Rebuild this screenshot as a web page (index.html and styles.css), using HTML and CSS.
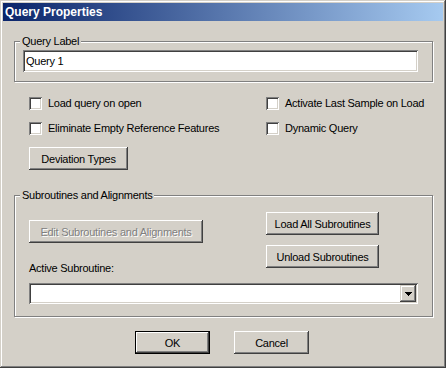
FILE: index.html
```html
<!DOCTYPE html>
<html>
<head>
<meta charset="utf-8">
<link rel="stylesheet" href="styles.css">
</head>
<body>
<div class="window">
  <div class="titlebar">Query Properties</div>
  <div class="group group-label">
    <span class="caption">Query Label</span>
    <div class="textbox">Query 1</div>
  </div>
  <div class="checks">
    <label class="check"><span class="box"></span>Load query on open</label>
    <label class="check"><span class="box"></span>Activate Last Sample on Load</label>
    <label class="check"><span class="box"></span>Eliminate Empty Reference Features</label>
    <label class="check"><span class="box"></span>Dynamic Query</label>
  </div>
  <button class="btn btn-deviation">Deviation Types</button>
  <div class="group group-sub">
    <span class="caption">Subroutines and Alignments</span>
    <div class="sub-row">
      <div class="sub-left">
        <button class="btn btn-edit" disabled>Edit Subroutines and Alignments</button>
        <div class="active-label">Active Subroutine:</div>
      </div>
      <div class="sub-right">
        <button class="btn btn-wide">Load All Subroutines</button>
        <button class="btn btn-wide">Unload Subroutines</button>
      </div>
    </div>
    <div class="combo">
      <span class="drop"><svg width="7" height="4" viewBox="0 0 7 4" shape-rendering="crispEdges"><rect x="0" y="0" width="7" height="1"/><rect x="1" y="1" width="5" height="1"/><rect x="2" y="2" width="3" height="1"/><rect x="3" y="3" width="1" height="1"/></svg></span>
    </div>
  </div>
  <div class="actions">
    <button class="btn btn-action btn-default">OK</button>
    <button class="btn btn-action">Cancel</button>
  </div>
</div>
</body>
</html>
```
FILE: styles.css
```css
html, body {
  margin: 0;
  padding: 0;
  background: #d4d0c8;
}
body {
  font-family: "Liberation Sans", Arial, sans-serif;
  font-size: 11px;
  letter-spacing: -0.25px;
  color: #000;
}
.window {
  width: 446px;
  height: 368px;
  box-sizing: border-box;
  padding: 3px;
  background: #d4d0c8;
  box-shadow: inset -1px -1px 0 #404040, inset 1px 1px 0 #d4d0c8, inset -2px -2px 0 #808080, inset 2px 2px 0 #fff;
}
.titlebar {
  height: 18px;
  line-height: 18px;
  padding-left: 2px;
  background: linear-gradient(to right, #0a246a, #a6caf0);
  color: #fff;
  font-weight: bold;
  font-size: 12px;
  letter-spacing: 0;
}
.group {
  position: relative;
  border: 1px solid #808080;
  box-shadow: 1px 1px 0 #fff, inset 1px 1px 0 #fff;
  margin-left: 11px;
  margin-right: 10px;
}
.caption {
  position: absolute;
  top: -7px;
  left: 5px;
  padding: 0 2px;
  line-height: 13px;
  background: #d4d0c8;
}
.group-label {
  margin-top: 20px;
  padding: 8px 14px 9px 8px;
}
.textbox {
  width: 395px;
  height: 22px;
  box-sizing: border-box;
  padding-left: 3px;
  line-height: 22px;
  background: #fff;
  box-shadow: inset 1px 1px 0 #808080, inset -1px -1px 0 #fff, inset 2px 2px 0 #404040, inset -2px -2px 0 #d4d0c8;
}
.checks {
  margin: 15px 0 0 26px;
  display: grid;
  grid-template-columns: 237px auto;
  row-gap: 12px;
}
.check {
  display: flex;
  align-items: center;
  gap: 6px;
  height: 13px;
  line-height: 13px;
  white-space: nowrap;
}
.box {
  width: 13px;
  height: 13px;
  flex: none;
  background: #fff;
  box-shadow: inset 1px 1px 0 #808080, inset -1px -1px 0 #fff, inset 2px 2px 0 #404040, inset -2px -2px 0 #d4d0c8;
}
.btn {
  display: block;
  box-sizing: border-box;
  height: 23px;
  padding: 0;
  border: none;
  background: #d4d0c8;
  font-family: "Liberation Sans", Arial, sans-serif;
  font-size: 11px;
  letter-spacing: -0.25px;
  color: #000;
  text-align: center;
  white-space: nowrap;
  box-shadow: inset -1px -1px 0 #404040, inset 1px 1px 0 #fff, inset -2px -2px 0 #808080, inset 2px 2px 0 #d4d0c8;
}
.btn:disabled {
  color: #808080;
  text-shadow: 1px 1px 0 #fff;
}
.btn-deviation {
  width: 99px;
  margin: 12px 0 0 26px;
}
.group-sub {
  margin-top: 25px;
  padding: 0 14px 12px 14px;
}
.sub-row {
  display: flex;
}
.sub-left {
  width: 237px;
  padding-top: 24px;
}
.btn-edit {
  width: 174px;
}
.active-label {
  margin-top: 19px;
  line-height: 13px;
}
.sub-right {
  padding-top: 16px;
  display: flex;
  flex-direction: column;
  gap: 10px;
}
.btn-wide {
  width: 113px;
}
.combo {
  margin-top: 8px;
  width: 389px;
  height: 21px;
  box-sizing: border-box;
  padding: 2px;
  display: flex;
  justify-content: flex-end;
  background: #fff;
  box-shadow: inset 1px 1px 0 #808080, inset -1px -1px 0 #fff, inset 2px 2px 0 #404040, inset -2px -2px 0 #d4d0c8;
}
.drop {
  width: 16px;
  height: 17px;
  display: flex;
  align-items: center;
  justify-content: center;
  background: #d4d0c8;
  box-shadow: inset -1px -1px 0 #404040, inset 1px 1px 0 #d4d0c8, inset -2px -2px 0 #808080, inset 2px 2px 0 #fff;
}
.drop svg {
  display: block;
  fill: #000;
}
.actions {
  display: flex;
  gap: 24px;
  margin-top: 14px;
  padding-left: 132px;
}
.btn-action {
  width: 75px;
}
.btn-default {
  box-shadow: inset 0 0 0 1px #000, inset -2px -2px 0 #404040, inset 2px 2px 0 #fff, inset -3px -3px 0 #808080;
}
```
